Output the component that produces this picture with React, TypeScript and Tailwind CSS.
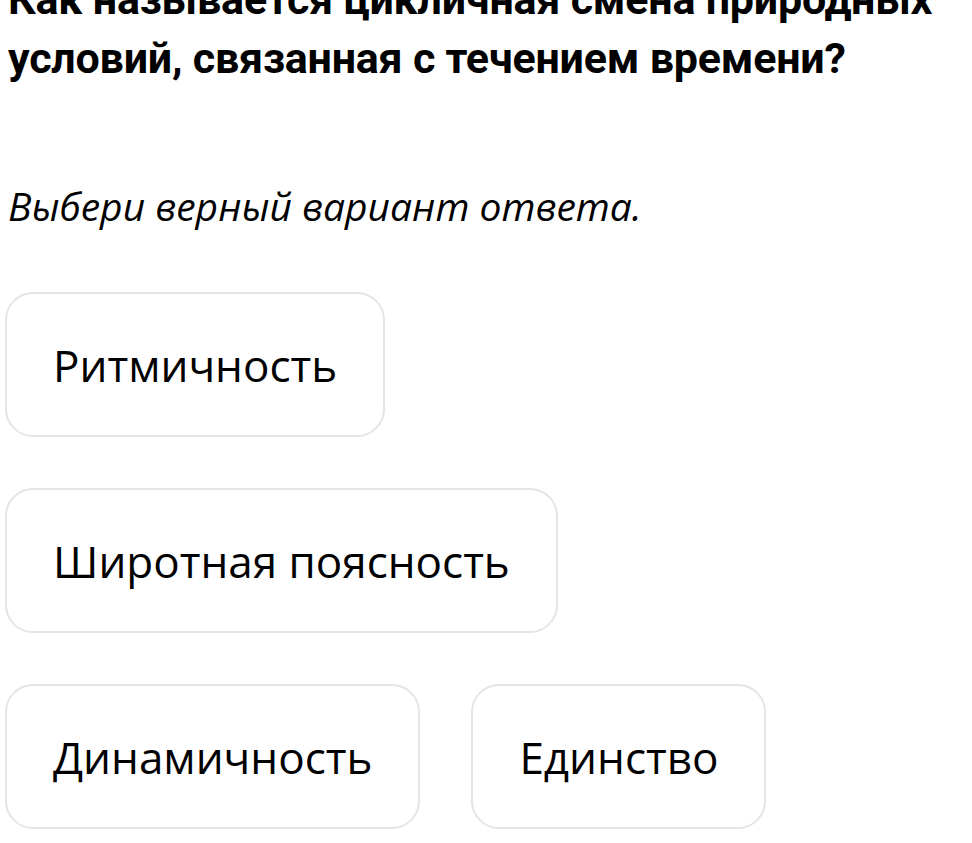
import React from "react";

const rows: string[][] = [
  ["Ритмичность"],
  ["Широтная поясность"],
  ["Динамичность", "Единство"],
];

function Option({ label }: { label: string }) {
  return (
    <button
      type="button"
      className="flex h-[145px] items-center rounded-[28px] border-2 border-[#e5e5e5] bg-white px-[46px] text-left"
    >
      <span className="font-['Open_Sans','Noto_Sans',sans-serif] text-[44px] leading-none text-black">
        {label}
      </span>
    </button>
  );
}

export default function App() {
  return (
    <div className="min-h-[843px] overflow-hidden bg-white text-black">
      <div className="-mt-[30px] pl-[8px]">
        <h1 className="w-[950px] font-['Roboto',sans-serif] text-[43px] font-bold leading-[59px] tracking-[-0.005em]">
          Как называется цикличная смена природных условий, связанная с течением времени?
        </h1>
        <p className="mt-[93px] font-['Open_Sans','Noto_Sans',sans-serif] text-[39px] italic leading-[50px]">
          Выбери верный вариант ответа.
        </p>
      </div>
      <div className="mt-[61px] flex flex-col gap-[51px] pl-[5px]">
        {rows.map((row, i) => (
          <div key={i} className="flex gap-[51px]">
            {row.map((label) => (
              <Option key={label} label={label} />
            ))}
          </div>
        ))}
      </div>
    </div>
  );
}
